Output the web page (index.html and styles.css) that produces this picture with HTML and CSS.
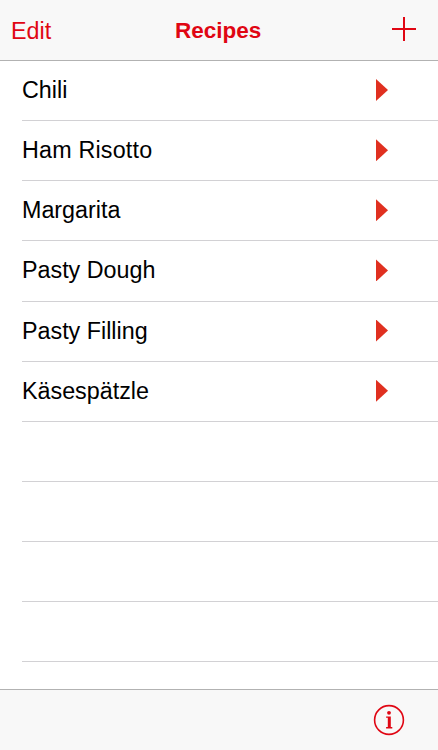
FILE: index.html
```html
<!DOCTYPE html>
<html lang="en">
<head>
  <meta charset="UTF-8">
  <meta name="viewport" content="width=device-width, initial-scale=1.0">
  <title>Recipes</title>
  <link rel="stylesheet" href="styles.css">
</head>
<body>
  <header class="navbar">
    <button class="edit">Edit</button>
    <h1>Recipes</h1>
    <button class="add" aria-label="Add">
      <svg width="24" height="24" viewBox="0 0 24 24"><path d="M12 0v24M0 12h24"/></svg>
    </button>
  </header>

  <ul class="recipes">
    <li><span>Chili</span><i class="arrow"></i></li>
    <li><span class="wide">Ham Risotto</span><i class="arrow"></i></li>
    <li><span>Margarita</span><i class="arrow"></i></li>
    <li><span>Pasty Dough</span><i class="arrow"></i></li>
    <li><span>Pasty Filling</span><i class="arrow"></i></li>
    <li><span>Käsespätzle</span><i class="arrow"></i></li>
    <li></li>
    <li></li>
    <li></li>
    <li></li>
    <li></li>
  </ul>

  <footer class="toolbar">
    <button class="info" aria-label="Info">
      <svg width="32" height="32" viewBox="0 0 32 32">
        <circle class="ring" cx="16" cy="16" r="14.4"/>
        <circle cx="16" cy="8.8" r="1.9"/>
        <path d="M13.1 12.4h4.7v10.7h1.5v1.3h-6.2v-1.3h1.7v-9.4h-1.7z"/>
      </svg>
    </button>
  </footer>
</body>
</html>
```

FILE: styles.css
```css
* {
  box-sizing: border-box;
}

body {
  margin: 0;
  height: 750px;
  display: flex;
  flex-direction: column;
  overflow: hidden;
  background-color: #fff;
  color: #000;
  font-family: 'Liberation Sans', Arial, sans-serif;
  font-size: 23.3px;
}

button {
  border: none;
  padding: 0;
  background: none;
  color: #e00613;
  font: inherit;
}

svg {
  display: block;
}

.navbar {
  flex: none;
  height: 61px;
  padding: 2px 22px 0 11px;
  display: grid;
  grid-template-columns: 164px auto 1fr;
  align-items: center;
  background-color: #f8f8f8;
  border-bottom: 1px solid #b2b2b2;
}

.navbar h1 {
  margin: 0;
  color: #e00613;
  font-size: 22.5px;
}

.edit {
  justify-self: start;
}

.add {
  justify-self: end;
  margin-bottom: 5px;
}

.add path {
  stroke: #e00613;
  stroke-width: 2;
}

.recipes {
  flex: 1;
  min-height: 0;
  margin: 0;
  padding: 0 0 0 22px;
  list-style: none;
  overflow: hidden;
}

.recipes li {
  height: 60.14px;
  padding-right: 50px;
  display: flex;
  align-items: center;
  justify-content: space-between;
  border-bottom: 1px solid #d2d1d4;
}

.wide {
  letter-spacing: 0.2px;
}

.arrow {
  width: 12px;
  height: 22px;
  margin-bottom: 1px;
  background-color: #e03020;
  clip-path: polygon(0 0, 100% 50%, 0 100%);
}

.toolbar {
  flex: none;
  height: 61px;
  padding-right: 33px;
  display: flex;
  align-items: center;
  justify-content: flex-end;
  background-color: #f8f8f8;
  border-top: 1px solid #b2b2b2;
}

.info svg {
  fill: #e00613;
}

.info .ring {
  fill: none;
  stroke: #e00613;
  stroke-width: 1.6;
}
```
